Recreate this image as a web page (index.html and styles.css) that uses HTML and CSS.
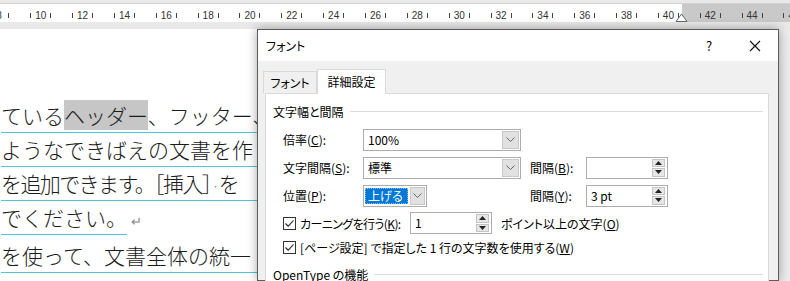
FILE: index.html
```html
<!DOCTYPE html>
<html lang="ja">
<head>
  <meta charset="UTF-8" />
  <title>フォント - 詳細設定</title>
  <link rel="stylesheet" href="styles.css">
</head>
<body>
  <div class="ruler">
    <div class="ruler-strip">
      <div class="ruler-scale">
        <div class="ruler-cell"><span class="tick"></span><span class="num">8</span><span class="tick"></span></div>
        <div class="ruler-cell"><span class="tick"></span><span class="num">10</span><span class="tick"></span></div>
        <div class="ruler-cell"><span class="tick"></span><span class="num">12</span><span class="tick"></span></div>
        <div class="ruler-cell"><span class="tick"></span><span class="num">14</span><span class="tick"></span></div>
        <div class="ruler-cell"><span class="tick"></span><span class="num">16</span><span class="tick"></span></div>
        <div class="ruler-cell"><span class="tick"></span><span class="num">18</span><span class="tick"></span></div>
        <div class="ruler-cell"><span class="tick"></span><span class="num">20</span><span class="tick"></span></div>
        <div class="ruler-cell"><span class="tick"></span><span class="num">22</span><span class="tick"></span></div>
        <div class="ruler-cell"><span class="tick"></span><span class="num">24</span><span class="tick"></span></div>
        <div class="ruler-cell"><span class="tick"></span><span class="num">26</span><span class="tick"></span></div>
        <div class="ruler-cell"><span class="tick"></span><span class="num">28</span><span class="tick"></span></div>
        <div class="ruler-cell"><span class="tick"></span><span class="num">30</span><span class="tick"></span></div>
        <div class="ruler-cell"><span class="tick"></span><span class="num">32</span><span class="tick"></span></div>
        <div class="ruler-cell"><span class="tick"></span><span class="num">34</span><span class="tick"></span></div>
        <div class="ruler-cell"><span class="tick"></span><span class="num">36</span><span class="tick"></span></div>
        <div class="ruler-cell"><span class="tick"></span><span class="num">38</span><span class="tick"></span></div>
        <div class="ruler-cell"><span class="tick"></span><span class="num">40</span><span class="tick"></span></div>
        <div class="ruler-cell"><span class="tick"></span><span class="num">42</span><span class="tick"></span></div>
        <div class="ruler-cell"><span class="tick"></span><span class="num">44</span><span class="tick"></span></div>
        <div class="ruler-cell"><span class="tick"></span><span class="num">46</span><span class="tick"></span></div>
      </div>
      <svg class="indent-mark" width="13" height="9" viewBox="0 0 13 9"><path d="M1 8.5 L6.5 1 L12 8.5 Z" fill="#fff" stroke="#6a6a6a"/></svg>
    </div>
  </div>

  <div class="workspace">
    <div class="doc">
      <div class="line">ている<span class="sel">ヘッダー</span>、フッター、</div>
      <div class="line">ようなできばえの文書を作</div>
      <div class="line tight">を追加できます。［挿入］<span class="sp">·</span>を</div>
      <div class="line last"><span class="end">でください。</span><span class="ret">↵</span></div>
      <div class="line">を使って、文書全体の統一</div>
    </div>

    <div class="dialog">
      <div class="titlebar">
        <span class="title">フォント</span>
        <span class="tb-btn">?</span>
        <span class="tb-btn">
          <svg width="12" height="12" viewBox="0 0 12 12"><path d="M1 1 L11 11 M11 1 L1 11" stroke="#111" stroke-width="1.1"/></svg>
        </span>
      </div>

      <div class="dlg-body">
        <div class="tabs">
          <div class="tab">フォント</div>
          <div class="tab active">詳細設定</div>
        </div>

        <div class="panel">
          <div class="group">文字幅と間隔<span class="rule"></span></div>

          <div class="form-grid">
            <label class="lbl">倍率(<u>C</u>):</label>
            <div class="combo wide">
              <span class="combo-text">100%</span>
              <span class="combo-btn"><svg width="9" height="5" viewBox="0 0 9 5"><path d="M0.5 0.5 L4.5 4.5 L8.5 0.5" fill="none" stroke="#666"/></svg></span>
            </div>
            <span></span><span></span>

            <label class="lbl">文字間隔(<u>S</u>):</label>
            <div class="combo wide">
              <span class="combo-text">標準</span>
              <span class="combo-btn"><svg width="9" height="5" viewBox="0 0 9 5"><path d="M0.5 0.5 L4.5 4.5 L8.5 0.5" fill="none" stroke="#666"/></svg></span>
            </div>
            <label class="lbl">間隔(<u>B</u>):</label>
            <div class="spin">
              <span class="spin-text"></span>
              <span class="spin-btns">
                <span class="spin-btn"><svg width="7" height="4" viewBox="0 0 7 4"><path d="M0 4 L3.5 0 L7 4 Z" fill="#222"/></svg></span>
                <span class="spin-btn"><svg width="7" height="4" viewBox="0 0 7 4"><path d="M0 0 L3.5 4 L7 0 Z" fill="#222"/></svg></span>
              </span>
            </div>

            <label class="lbl">位置(<u>P</u>):</label>
            <div class="combo narrow focus">
              <span class="combo-text picked">上げる</span>
              <span class="combo-btn"><svg width="9" height="5" viewBox="0 0 9 5"><path d="M0.5 0.5 L4.5 4.5 L8.5 0.5" fill="none" stroke="#666"/></svg></span>
            </div>
            <label class="lbl">間隔(<u>Y</u>):</label>
            <div class="spin">
              <span class="spin-text">3 pt</span>
              <span class="spin-btns">
                <span class="spin-btn"><svg width="7" height="4" viewBox="0 0 7 4"><path d="M0 4 L3.5 0 L7 4 Z" fill="#222"/></svg></span>
                <span class="spin-btn"><svg width="7" height="4" viewBox="0 0 7 4"><path d="M0 0 L3.5 4 L7 0 Z" fill="#222"/></svg></span>
              </span>
            </div>
          </div>

          <div class="check-row">
            <svg class="check" width="13" height="13" viewBox="0 0 13 13"><rect x="0.5" y="0.5" width="12" height="12" fill="#fff" stroke="#333"/><path d="M2.5 6.5 L5.2 9.2 L10.5 3.5" fill="none" stroke="#222" stroke-width="1.1"/></svg>
            <span class="check-label kern">カーニングを行う(<u>K</u>):</span>
            <div class="spin">
              <span class="spin-text">1</span>
              <span class="spin-btns">
                <span class="spin-btn"><svg width="7" height="4" viewBox="0 0 7 4"><path d="M0 4 L3.5 0 L7 4 Z" fill="#222"/></svg></span>
                <span class="spin-btn"><svg width="7" height="4" viewBox="0 0 7 4"><path d="M0 0 L3.5 4 L7 0 Z" fill="#222"/></svg></span>
              </span>
            </div>
            <span class="after">ポイント以上の文字(<u>O</u>)</span>
          </div>

          <div class="check-row second">
            <svg class="check" width="13" height="13" viewBox="0 0 13 13"><rect x="0.5" y="0.5" width="12" height="12" fill="#fff" stroke="#333"/><path d="M2.5 6.5 L5.2 9.2 L10.5 3.5" fill="none" stroke="#222" stroke-width="1.1"/></svg>
            <span class="check-label">[ページ設定] で指定した 1 行の文字数を使用する(<u>W</u>)</span>
          </div>

          <div class="group lower">OpenType の機能<span class="rule"></span></div>
        </div>
      </div>
    </div>

    <div class="side"></div>
  </div>
</body>
</html>
```

FILE: styles.css
```css
* {
  box-sizing: border-box;
}
body {
  margin: 0;
  width: 790px;
  height: 281px;
  overflow: hidden;
  background: #fff;
  font-family: "Noto Sans CJK JP", sans-serif;
  color: #000;
}

/* ruler */
.ruler {
  height: 29px;
  background: #e9e9e9;
  padding-top: 3px;
}
.ruler-strip {
  position: relative;
  height: 19px;
  border-top: 1px solid #d2d2d2;
  background: linear-gradient(to right, #fff 682px, #c9c9c9 682px);
  overflow: hidden;
}
.ruler-scale {
  display: flex;
  margin-left: -22px;
  height: 18px;
  padding-top: 4px;
  align-items: center;
}
.ruler-cell {
  flex: 0 0 41.85px;
  display: flex;
  justify-content: center;
  align-items: center;
}
.tick {
  width: 1px;
  height: 5px;
  background: #444;
}
.num {
  width: 19px;
  text-align: center;
  font: 10px "Liberation Sans", sans-serif;
  color: #333;
}
.indent-mark {
  position: absolute;
  left: 675px;
  bottom: 0;
}

/* document + dialog */
.workspace {
  display: flex;
  height: 252px;
}
.doc {
  width: 257px;
  flex: none;
  overflow: hidden;
  padding-top: 70px;
  padding-left: 1px;
  font-size: 21px;
  font-weight: 300;
  color: #1b1b1b;
  white-space: nowrap;
}
.line {
  height: 34px;
  line-height: 33px;
  border-bottom: 1px solid #4cc8d8;
}
.line.tight {
  letter-spacing: -1.6px;
}
.line.last {
  border-bottom: none;
  margin-bottom: 4px;
}
.line .end {
  display: inline-block;
  height: 34px;
  border-bottom: 1px solid #4cc8d8;
}
.sel {
  background: #c6c6c6;
}
.sp {
  color: #777;
  font-size: 14px;
  margin: 0 1px;
}
.ret {
  color: #888;
  font-size: 13px;
  margin-left: 4px;
}

.dialog {
  width: 522px;
  flex: none;
  border: 1px solid #5c5c5c;
  background: #f0f0f0;
  box-shadow: 0 0 10px rgba(0, 0, 0, 0.35);
  font-size: 12px;
  font-feature-settings: "palt";
  position: relative;
}
.side {
  flex: 1;
  background: #ececec;
}

.titlebar {
  height: 31px;
  background: #fff;
  display: flex;
  align-items: center;
}
.title {
  flex: 1;
  padding-left: 8px;
}
.tb-btn {
  width: 46px;
  height: 31px;
  display: flex;
  align-items: center;
  justify-content: center;
  font-size: 13px;
}

.dlg-body {
  padding-top: 7px;
}
.tabs {
  display: flex;
  align-items: flex-end;
  padding-left: 5px;
  height: 25px;
}
.tab {
  height: 22px;
  width: 54px;
  border: 1px solid #d9d9d9;
  border-bottom: none;
  text-align: center;
  line-height: 21px;
}
.tab.active {
  height: 25px;
  width: 69px;
  background: #fff;
  margin-bottom: -1px;
  position: relative;
  line-height: 24px;
}

.panel {
  margin-left: 7px;
  width: 504px;
  height: 200px;
  background: #fff;
  border: 1px solid #d9d9d9;
  padding: 9px 5px 0 7px;
}
.group {
  display: flex;
  align-items: center;
  height: 16px;
}
.group .rule {
  flex: 1;
  height: 1px;
  background: #dcdcdc;
  margin-left: 6px;
}
.group.lower {
  margin-top: 9px;
}

.form-grid {
  display: grid;
  grid-template-columns: 80px 167px 56px 82px;
  grid-auto-rows: 23px;
  row-gap: 5px;
  margin: 9px 0 0 10px;
  align-items: center;
}
.lbl {
  white-space: nowrap;
}
u {
  text-underline-offset: 1px;
}

.combo {
  height: 22px;
  border: 1px solid #adadad;
  background: #fff;
  display: flex;
}
.combo.wide {
  width: 158px;
}
.combo.narrow {
  width: 64px;
}
.combo-text {
  flex: 1;
  padding-left: 4px;
  line-height: 20px;
}
.combo-text.picked {
  flex: none;
  width: 43px;
  margin: 2px 2px 2px 1px;
  padding-left: 3px;
  line-height: 16px;
  background: #0078d7;
  color: #fff;
  outline: 1px dotted #8ab8e8;
  outline-offset: -1px;
}
.combo-btn {
  width: 17px;
  margin: 1px;
  background: #e1e1e1;
  border: 1px solid #c8c8c8;
  display: flex;
  align-items: center;
  justify-content: center;
}
.combo.focus .combo-btn {
  margin-left: 0;
}

.spin {
  width: 82px;
  height: 22px;
  border: 1px solid #adadad;
  background: #fff;
  display: flex;
}
.spin-text {
  flex: 1;
  padding-left: 4px;
  line-height: 20px;
}
.spin-btns {
  display: flex;
  flex-direction: column;
  gap: 1px;
  padding: 1px 2px 1px 0;
}
.spin-btn {
  width: 13px;
  flex: 1;
  background: #e6e6e6;
  border: 1px solid #c4c4c4;
  display: flex;
  align-items: center;
  justify-content: center;
}

.check-row {
  display: flex;
  align-items: center;
  height: 22px;
  margin: 5px 0 0 10px;
}
.check-row.second {
  height: 20px;
  margin-top: 3px;
}
.check {
  flex: none;
}
.check-label {
  margin-left: 4px;
  white-space: nowrap;
}
.check-label.kern {
  width: 110px;
  letter-spacing: -0.6px;
}
.after {
  margin-left: 9px;
  white-space: nowrap;
}
```
